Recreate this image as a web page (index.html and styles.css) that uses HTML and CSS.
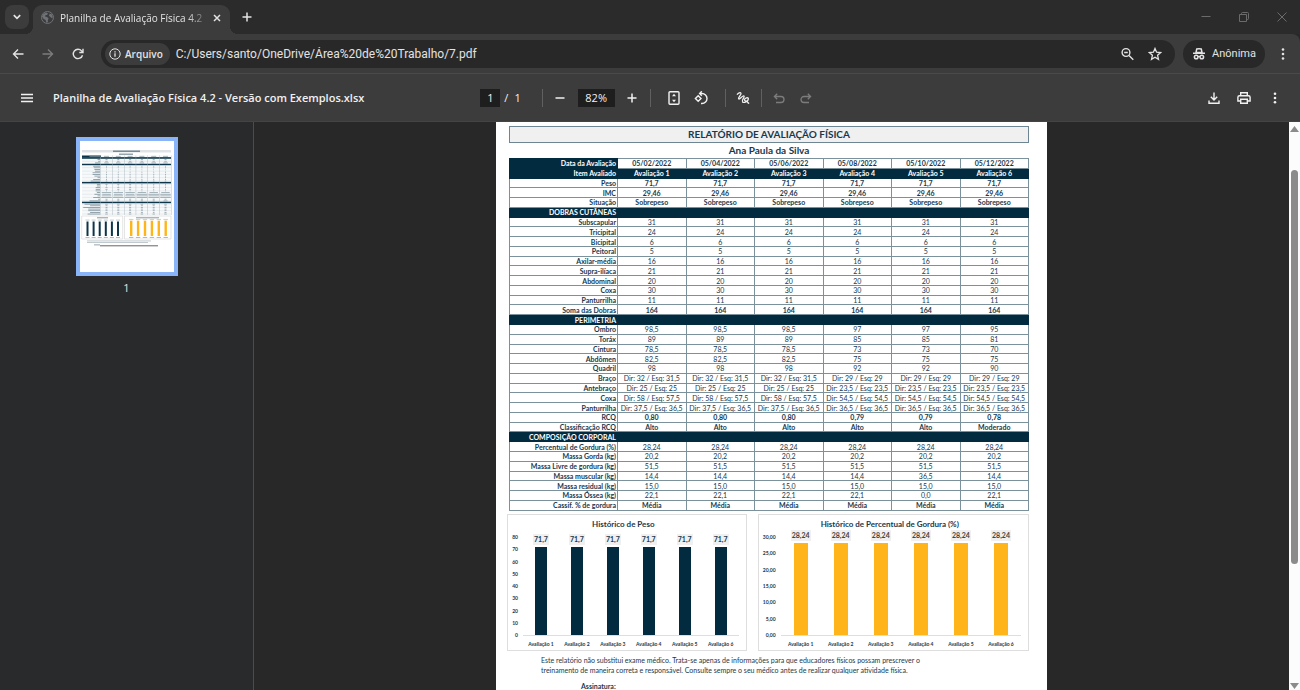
FILE: index.html
```html
<!DOCTYPE html>
<html lang="pt-BR">
<head>
  <meta charset="utf-8">
  <title>Planilha de Avaliação Física 4.2</title>
  <link rel="stylesheet" href="styles.css">
</head>
<body>
  <header class="tab-strip">
    <button class="tab-search" aria-label="Pesquisar guias">
      <svg width="10" height="10" viewBox="0 0 10 10"><path d="M1.8 3.2 5 6.4 8.2 3.2" stroke-width="1.7"/></svg>
    </button>
    <div class="tab">
      <svg class="globe" width="13" height="13" viewBox="0 0 13 13">
        <circle cx="6.5" cy="6.5" r="6" />
        <path d="M2 3.2 5 1.5l2 1-1 1.6H4.6L4 5.6l2 .4 1.6 1.6-.8 1.6.2 2-1.6.6L4.6 9 2.4 7.8 1 5.6zM8.6 2.6l2.4 1 .9 3-1.5.4-1.4-1.6-1-.4z"/>
      </svg>
      <span class="tab-title">Planilha de Avaliação Física 4.2</span>
      <button class="tab-close" aria-label="Fechar">
        <svg width="10" height="10" viewBox="0 0 10 10"><path d="m2 2 6 6M8 2 2 8" stroke-width="1.5"/></svg>
      </button>
    </div>
    <button class="new-tab" aria-label="Nova guia">
      <svg width="12" height="12" viewBox="0 0 12 12"><path d="M6 1.5v9M1.5 6h9" stroke-width="1.5"/></svg>
    </button>
    <div class="window-buttons">
      <button aria-label="Minimizar"><svg width="10" height="10" viewBox="0 0 10 10"><path d="M.5 4.5h9"/></svg></button>
      <button aria-label="Restaurar"><svg width="10" height="10" viewBox="0 0 10 10"><path d="M.5 2.5h7v7h-7zM2.5 2.5V1.5q0-1 1-1h5q1 0 1 1v5q0 1-1 1h-1"/></svg></button>
      <button aria-label="Fechar janela"><svg width="10" height="10" viewBox="0 0 10 10"><path d="m.5.5 9 9M9.5.5l-9 9"/></svg></button>
    </div>
  </header>

  <nav class="toolbar">
    <button aria-label="Voltar"><svg width="12" height="12" viewBox="0 0 12 12"><path d="M11.5 6h-10M6 1.5 1.5 6 6 10.500" stroke-width="1.4"/></svg></button>
    <button class="off" aria-label="Avançar"><svg width="12" height="12" viewBox="0 0 12 12"><path d="M.5 6h10M6 1.5 10.500 6 6 10.500" stroke-width="1.4"/></svg></button>
    <button aria-label="Recarregar"><svg width="12" height="12" viewBox="0 0 12 12"><path d="M10.500 7.200A4.700 4.700 0 1 1 9.600 2.900L11 4.300M11 .8v3.700H7.300" stroke-width="1.4"/></svg></button>
    <div class="omnibox">
      <button class="origin">
        <svg width="12" height="12" viewBox="0 0 12 12"><circle cx="6" cy="6" r="5.200"/><path d="M6 5.300v3.400M6 3.200v1.300" stroke-width="1.300"/></svg>
        Arquivo
      </button>
      <input class="url" type="text" aria-label="Endereço" value="C:/Users/santo/OneDrive/Área%20de%20Trabalho/7.pdf">
      <button aria-label="Zoom"><svg width="14" height="14" viewBox="0 0 14 14"><circle cx="6" cy="5.500" r="3.900" stroke-width="1.400"/><path d="m9 8.500 4.300 4.300M4.200 5.500h3.600" stroke-width="1.400"/></svg></button>
      <button aria-label="Favoritos"><svg width="14" height="14" viewBox="0 0 14 14"><path d="m7 1.500 1.600 3.700 4 .4-3 2.700.9 4L7 10.200l-3.500 2.100.9-4-3-2.700 4-.4z" stroke-width="1.300"/></svg></button>
    </div>
    <button class="incognito">
      <svg width="14" height="14" viewBox="0 0 14 14"><path d="M4 5.500 4.700 2q2.300-.6 4.600 0l.7 3.500zM1 6.300h12" stroke-width="1.500"/><circle cx="4.200" cy="10" r="1.800" stroke-width="1.500"/><circle cx="9.800" cy="10" r="1.800" stroke-width="1.500"/><path d="M6 9.700q1-.6 2 0" stroke-width="1.300"/></svg>
      Anônima
    </button>
    <button aria-label="Menu"><svg class="dots" width="4" height="14" viewBox="0 0 4 14"><circle cx="2" cy="2.500" r="1.300"/><circle cx="2" cy="7" r="1.300"/><circle cx="2" cy="11.500" r="1.300"/></svg></button>
  </nav>

  <div class="pdf-bar">
    <div class="pdf-start">
      <button aria-label="Menu lateral"><svg width="12" height="10" viewBox="0 0 12 10"><path d="M0 1.500h12M0 5h12M0 8.500h12" stroke-width="1.500"/></svg></button>
      <h1>Planilha de Avaliação Física 4.2 - Versão com Exemplos.xlsx</h1>
    </div>
    <div class="pdf-middle">
      <input class="page-no" type="text" aria-label="Página" value="1">
      <span class="page-count"><span>/</span><span>1</span></span>
      <i></i>
      <button aria-label="Diminuir zoom"><svg width="12" height="12" viewBox="0 0 12 12"><path d="M1.500 6h9" stroke-width="1.500"/></svg></button>
      <input class="zoom" type="text" aria-label="Nível de zoom" value="82%">
      <button aria-label="Aumentar zoom"><svg width="12" height="12" viewBox="0 0 12 12"><path d="M6 1.500v9M1.500 6h9" stroke-width="1.500"/></svg></button>
      <i></i>
      <div class="view-tools">
        <button aria-label="Ajustar à página"><svg width="12" height="14" viewBox="0 0 12 14"><rect x="1" y=".8" width="10" height="12.400" rx="1" stroke-width="1.400"/><path class="fill" d="M6 2.800 8 5.300H4zM6 11.200 4 8.700h4z"/></svg></button>
        <button aria-label="Girar"><svg width="14" height="14" viewBox="0 0 14 14"><path d="M4.200 4.700 7 7.500l-2.800 2.800L1.400 7.500zM6 2.500h2a5 5 0 0 1 0 10H7M7.800.3 5.600 2.500l2.200 2.200" stroke-width="1.400"/></svg></button>
      </div>
      <i></i>
      <button aria-label="Desenhar"><svg width="14" height="14" viewBox="0 0 14 14"><path d="M1 3.600C2.300 2 4.300.9 5 2.200 5.700 3.600 1.800 6.400 2.700 7.800 3.700 9.100 6.700 3.900 8 5 9.300 6.200 5.200 8.800 6.500 10.800c1.300 1.600 5.800-.6 5.900-2.900C12.400 5.900 8.600 6.800 8.500 8.700c-.1 1.700 2.600 1 3.200 2.600.2.700.8 1 1.500.9" stroke-width="1.300"/></svg></button>
      <i></i>
      <button class="off" aria-label="Desfazer"><svg width="12" height="12" viewBox="0 0 12 12"><path d="M1.500 4.500H8a3 3 0 0 1 0 6H3M4.200 1.700 1.400 4.500l2.800 2.800" stroke-width="1.300"/></svg></button>
      <button class="off" aria-label="Refazer"><svg width="12" height="12" viewBox="0 0 12 12"><path d="M10.500 4.500H4a3 3 0 0 0 0 6h5M7.800 1.700l2.800 2.800-2.800 2.800" stroke-width="1.300"/></svg></button>
    </div>
    <div class="pdf-end">
      <button aria-label="Baixar"><svg width="12" height="12" viewBox="0 0 12 12"><path d="M6 .5v7M2.800 4.700 6 7.900l3.200-3.200M1 8.500v2.700h10V8.500" stroke-width="1.400"/></svg></button>
      <button aria-label="Imprimir"><svg width="14" height="14" viewBox="0 0 14 14"><path d="M3.700 4.500V1.700h6.600v2.800M3.500 10H.9V6.300q0-1.600 1.600-1.600h9q1.600 0 1.600 1.600V10h-2.600M3.700 8.300h6.600v4H3.700z" stroke-width="1.400"/></svg></button>
      <button class="more" aria-label="Mais ações"><svg class="dots" width="4" height="14" viewBox="0 0 4 14"><circle cx="2" cy="2.800" r="1.300"/><circle cx="2" cy="7" r="1.300"/><circle cx="2" cy="11.200" r="1.300"/></svg></button>
    </div>
  </div>

  <div class="content">
    <aside class="sidebar">
      <a class="thumb" href="#page"><svg id="thumb" width="94" height="131" viewBox="0 0 94 131"></svg></a>
      <span>1</span>
    </aside>

    <main class="viewer">
      <article class="page" id="page">
        <h2>RELATÓRIO DE AVALIAÇÃO FÍSICA</h2>
        <h3>Ana Paula da Silva</h3>
        <table class="report">
          <colgroup><col class="item"><col span="6"></colgroup>
          <tbody id="report"></tbody>
        </table>
        <div class="charts">
          <section class="chart weight">
            <h4>Histórico de Peso</h4>
            <div class="axis" id="weight-axis"></div>
            <div class="plot" id="weight-plot"></div>
          </section>
          <section class="chart fat">
            <h4>Histórico de Percentual de Gordura (%)</h4>
            <div class="axis" id="fat-axis"></div>
            <div class="plot" id="fat-plot"></div>
          </section>
        </div>
        <p class="note">Este relatório não substitui exame médico. Trata-se apenas de informações para que educadores físicos possam prescrever o<br>treinamento de maneira correta e responsável. Consulte sempre o seu médico antes de realizar qualquer atividade física.</p>
        <p class="signature">Assinatura:</p>
      </article>
    </main>

    <div class="scrollbar">
      <svg width="9" height="6" viewBox="0 0 9 6"><path d="M4.500 0 9 6H0z"/></svg>
      <div class="scroll-thumb"></div>
      <svg width="9" height="6" viewBox="0 0 9 6"><path d="M0 0h9L4.500 6z"/></svg>
    </div>
  </div>

  <script src="script.js"></script>
</body>
</html>
```
FILE: styles.css
```css
* {
  box-sizing: border-box;
}

body {
  margin: 0;
  height: 100vh;
  display: flex;
  flex-direction: column;
  overflow: hidden;
  background-color: #282828;
  color: #e3e3e3;
  font-family: "Open Sans", "Noto Sans", sans-serif;
  font-size: 11px;
}

h1, h2, h3, h4, p {
  margin: 0;
}

button, input {
  font: inherit;
  color: inherit;
  background: none;
  border: 0;
  padding: 0;
}

button {
  display: flex;
  align-items: center;
  justify-content: center;
}

svg {
  display: block;
  flex: none;
  fill: none;
  stroke: currentColor;
}

.dots, .fill {
  fill: currentColor;
  stroke: none;
}

.off {
  color: #7c7c7c;
}

/* tabs */
.tab-strip {
  display: flex;
  align-items: center;
  height: 34px;
  flex: none;
  background-color: #2b2b2b;
}

.tab-search {
  width: 24px;
  height: 24px;
  margin: 0 4px 0 5px;
  border-radius: 8px;
  background-color: #3c3c3c;
}

.tab {
  position: relative;
  display: flex;
  align-items: center;
  align-self: flex-end;
  width: 197px;
  height: 29px;
  padding: 0 8px 4px;
  border-radius: 9px 9px 0 0;
  background-color: #3c3c3c;
}

/* flared feet of the active tab */
.tab::before, .tab::after {
  content: "";
  position: absolute;
  bottom: 0;
  width: 8px;
  height: 8px;
}

.tab::before {
  right: 100%;
  background: radial-gradient(circle at 0 0, transparent 8px, #3c3c3c 8px);
}

.tab::after {
  left: 100%;
  background: radial-gradient(circle at 100% 0, transparent 8px, #3c3c3c 8px);
}

.globe {
  color: #6e7276;
}

.globe path {
  fill: currentColor;
  stroke: none;
}

.tab-title {
  flex: 1;
  margin: 0 2px 0 6px;
  font-size: 10px;
  white-space: nowrap;
  -webkit-mask-image: linear-gradient(to right, #000 85%, transparent);
  mask-image: linear-gradient(to right, #000 85%, transparent);
}

.new-tab {
  width: 34px;
  height: 24px;
}

.window-buttons {
  display: flex;
  gap: 28px;
  margin-left: auto;
  padding-right: 13px;
  color: #6b6b6b;
}

/* address bar */
.toolbar {
  display: flex;
  align-items: center;
  height: 40px;
  flex: none;
  padding: 0 7px 0 3px;
  background-color: #3c3c3c;
  border-bottom: 1px solid #4a4a4a;
  border-radius: 0 8px 0 0;
}

.toolbar > button {
  width: 30px;
  height: 28px;
}

.toolbar > button:last-child {
  width: 20px;
  margin-left: 8px;
}

.omnibox {
  flex: 1;
  display: flex;
  align-items: center;
  gap: 14px;
  height: 28px;
  margin: 0 8px;
  padding: 0 13px 0 4px;
  border-radius: 14px;
  background-color: #282828;
}

.origin {
  gap: 4px;
  height: 22px;
  padding: 0 7px 0 4px;
  border-radius: 11px;
  background-color: #3c3c3c;
  font-size: 10px;
  font-weight: 600;
}

.url {
  flex: 1;
  margin-left: -8px;
  font-family: Roboto, sans-serif;
  font-size: 12px;
}

.toolbar > .incognito {
  width: 82px;
  gap: 6px;
  border-radius: 14px;
  background-color: #282828;
  font-family: Roboto, sans-serif;
}

/* pdf controls */
.pdf-bar {
  display: grid;
  grid-template-columns: 1fr auto 1fr;
  align-items: center;
  height: 48px;
  flex: none;
  background-color: #3c3c3c;
  border-bottom: 1px solid #444;
  color: #f1f1f1;
}

.pdf-bar .off {
  color: #7c7c7c;
}

.pdf-start {
  display: flex;
  align-items: center;
  gap: 20px;
  padding-left: 21px;
}

.pdf-start h1 {
  font-size: 11px;
  font-weight: 600;
  white-space: nowrap;
}

.pdf-middle {
  display: flex;
  align-items: center;
}

.pdf-middle button {
  width: 27px;
  height: 24px;
}

.view-tools {
  display: flex;
  padding: 0 6px;
}

.pdf-middle i {
  width: 1px;
  height: 18px;
  margin: 0 4px;
  background-color: #606060;
}

.pdf-middle input {
  height: 18px;
  background-color: #1e1e1e;
  text-align: center;
}

.page-no {
  width: 20px;
}

.page-count {
  display: flex;
  gap: 6px;
  padding: 0 17px 0 4px;
}

.zoom {
  width: 37px;
  margin: 0 4px;
}

.pdf-end {
  display: flex;
  gap: 17px;
  justify-content: flex-end;
  padding-right: 23px;
}

.more {
  margin-left: 5px;
}

/* document */
.content {
  flex: 1;
  min-height: 0;
  display: flex;
}

.sidebar {
  display: flex;
  flex-direction: column;
  align-items: center;
  gap: 4px;
  width: 254px;
  padding-top: 15px;
  background-color: #282a2b;
  border-right: 1px solid #4c4c4c;
}

.thumb {
  padding: 4px;
  background-color: #8ab4f8;
}

.viewer {
  flex: 1;
  overflow: hidden;
}

.page {
  width: 551px;
  height: 780px;
  margin: 0 auto;
  padding: 4px 18px 0 13px;
  background-color: #fff;
  color: #17394e;
  font-family: Lato, sans-serif;
  font-size: 7px;
  line-height: 9px;
}

.page h2 {
  border: 1px solid #6c8793;
  background-color: #f0f0f0;
  font-size: 10px;
  line-height: 15px;
  text-align: center;
}

.page h3 {
  font-size: 10px;
  line-height: 15px;
  text-align: center;
}

.report {
  width: 100%;
  height: 353px;
  table-layout: fixed;
  border-collapse: collapse;
}

.report .item {
  width: 108px;
}

.report th, .report td {
  padding: 0;
  border: 1px solid #7b929d;
  line-height: 8px;
  text-align: center;
  white-space: nowrap;
}

.report tr th:first-child {
  padding-right: 1px;
  text-align: right;
}

.report .strong td {
  font-weight: 700;
}

.report .dark th, .report .dark td, .report .date th {
  background-color: #032b40;
  border-color: #032b40;
  color: #fff;
}

.charts {
  display: flex;
  gap: 11px;
  margin: 3px 0 0 -2px;
}

.chart {
  flex: 239;
  display: grid;
  grid-template: 18px 1fr / 15px 1fr;
  height: 137px;
  padding-right: 7px;
  border: 1px solid #dedede;
  font-weight: 700;
}

.chart.fat {
  flex: 272;
  grid-template-columns: 22px 1fr;
}

.chart h4 {
  grid-column: 1 / 3;
  font-size: 8px;
  line-height: 18px;
  text-align: center;
}

.axis {
  display: flex;
  flex-direction: column;
  justify-content: space-between;
  align-self: start;
  height: 106px;
  font-size: 5px;
  line-height: 8px;
  text-align: right;
  padding-right: 5px;
}

.plot {
  display: flex;
  margin-top: 4px;
  height: 98px;
}

.bar-slot {
  flex: 1;
  display: flex;
  flex-direction: column;
  align-items: center;
  justify-content: flex-end;
  height: 112px;
}

.bar {
  flex: none;
  width: 12px;
  margin-top: 2px;
  background-color: #032b40;
}

.fat .bar {
  width: 14px;
  background-color: #ffb519;
}

.value {
  padding: 1px 1px;
  background-color: #f0f0f0;
}

.fat .value {
  color: #444;
}

.bar-name {
  align-self: stretch;
  border-top: 1px solid #dedede;
  padding-top: 3px;
  font-size: 5px;
  line-height: 10px;
  text-align: center;
  white-space: nowrap;
}

.note {
  margin: 4px 0 0 32px;
  line-height: 10px;
  white-space: nowrap;
}

.signature {
  margin: 7px 0 0 72px;
  font-weight: 700;
}

/* scrollbar */
.scrollbar {
  display: flex;
  flex-direction: column;
  align-items: center;
  width: 11px;
  padding: 4px 0 1px;
  background-color: #fcfcfc;
}

.scrollbar svg {
  fill: #8b8b8b;
  stroke: none;
}

.scroll-thumb {
  width: 7px;
  height: 70%;
  margin: 38px 0 auto;
  border-radius: 4px;
  background-color: #8b8b8b;
}
```
FILE: script.js
```javascript
const rows = [
  ["date", "Data da Avaliação", "05/02/2022", "05/04/2022", "05/06/2022", "05/08/2022", "05/10/2022", "05/12/2022"],
  ["dark", "Item Avaliado", "Avaliação 1", "Avaliação 2", "Avaliação 3", "Avaliação 4", "Avaliação 5", "Avaliação 6"],
  ["strong", "Peso", "71,7"],
  ["strong", "IMC", "29,46"],
  ["strong", "Situação", "Sobrepeso"],
  ["section", "DOBRAS CUTÂNEAS"],
  ["", "Subscapular", "31"],
  ["", "Tricipital", "24"],
  ["", "Bicipital", "6"],
  ["", "Peitoral", "5"],
  ["", "Axilar-média", "16"],
  ["", "Supra-ilíaca", "21"],
  ["", "Abdominal", "20"],
  ["", "Coxa", "30"],
  ["", "Panturrilha", "11"],
  ["strong", "Soma das Dobras", "164"],
  ["section", "PERIMETRIA"],
  ["", "Ombro", "98,5", "98,5", "98,5", "97", "97", "95"],
  ["", "Toráx", "89", "89", "89", "85", "85", "81"],
  ["", "Cintura", "78,5", "78,5", "78,5", "73", "73", "70"],
  ["", "Abdômen", "82,5", "82,5", "82,5", "75", "75", "75"],
  ["", "Quadril", "98", "98", "98", "92", "92", "90"],
  ["", "Braço", "Dir: 32 / Esq: 31,5", "Dir: 32 / Esq: 31,5", "Dir: 32 / Esq: 31,5", "Dir: 29 / Esq: 29", "Dir: 29 / Esq: 29", "Dir: 29 / Esq: 29"],
  ["", "Antebraço", "Dir: 25 / Esq: 25", "Dir: 25 / Esq: 25", "Dir: 25 / Esq: 25", "Dir: 23,5 / Esq: 23,5", "Dir: 23,5 / Esq: 23,5", "Dir: 23,5 / Esq: 23,5"],
  ["", "Coxa", "Dir: 58 / Esq: 57,5", "Dir: 58 / Esq: 57,5", "Dir: 58 / Esq: 57,5", "Dir: 54,5 / Esq: 54,5", "Dir: 54,5 / Esq: 54,5", "Dir: 54,5 / Esq: 54,5"],
  ["", "Panturrilha", "Dir: 37,5 / Esq: 36,5", "Dir: 37,5 / Esq: 36,5", "Dir: 37,5 / Esq: 36,5", "Dir: 36,5 / Esq: 36,5", "Dir: 36,5 / Esq: 36,5", "Dir: 36,5 / Esq: 36,5"],
  ["strong", "RCQ", "0,80", "0,80", "0,80", "0,79", "0,79", "0,78"],
  ["strong", "Classificação RCQ", "Alto", "Alto", "Alto", "Alto", "Alto", "Moderado"],
  ["section", "COMPOSIÇÃO CORPORAL"],
  ["", "Percentual de Gordura (%)", "28,24"],
  ["", "Massa Gorda (kg)", "20,2"],
  ["", "Massa Livre de gordura (kg)", "51,5"],
  ["", "Massa muscular (kg)", "14,4", "14,4", "14,4", "14,4", "36,5", "14,4"],
  ["", "Massa residual (kg)", "15,0"],
  ["", "Massa Óssea (kg)", "22,1", "22,1", "22,1", "22,1", "0,0", "22,1"],
  ["strong", "Cassif. % de gordura", "Média"]
];

// A row with a single value repeats it in all six columns
function buildReport() {
  let html = "";
  for (const [kind, name, ...values] of rows) {
    if (kind === "section") {
      html += `<tr class="dark"><th>${name}</th><td colspan="6"></td></tr>`;
      continue;
    }
    const cls = kind === "dark" ? "dark strong" : kind === "date" ? "date strong" : kind;
    html += `<tr class="${cls}"><th>${name}</th>`;
    for (let i = 0; i < 6; i++) {
      html += `<td>${values[i] || values[0]}</td>`;
    }
    html += "</tr>";
  }
  document.getElementById("report").innerHTML = html;
}

function buildChart(id, value, max, step, decimals) {
  const format = n => n.toFixed(decimals).replace(".", ",");
  let axis = "";
  for (let n = max; n >= 0; n -= step) {
    axis += `<span>${format(n)}</span>`;
  }
  let plot = "";
  for (let i = 1; i <= 6; i++) {
    plot += `<div class="bar-slot"><span class="value">${String(value).replace(".", ",")}</span>` +
      `<div class="bar" style="height: ${Math.round(value / max * 98)}px"></div>` +
      `<span class="bar-name">Avaliação ${i}</span></div>`;
  }
  document.getElementById(id + "-axis").innerHTML = axis;
  document.getElementById(id + "-plot").innerHTML = plot;
}

function buildThumb() {
  const rect = (x, y, w, h, fill) => `<rect x="${x}" y="${y}" width="${w}" height="${h}" fill="${fill}"/>`;
  let s = rect(0, 0, 94, 131, "#fff");
  s += rect(2, 9, 89, 2.5, "#dfe3e5") + rect(33, 9.6, 27, 1.2, "#5b7482");
  s += rect(39, 12.6, 14, 1.2, "#7c909b");
  rows.forEach((row, i) => {
    const y = 14.5 + i * 1.65;
    if (row[0] === "section" || row[0] === "dark") {
      s += rect(2, y, 89, 1.8, "#0c3549");
      return;
    }
    s += rect(2, y, 89, 1.5, i % 2 ? "#e9eef0" : "#f6f8f9");
    if (row[0] === "date") s += rect(2, y, 19, 1.8, "#0c3549");
    const w = Math.min(row[1].length * .62, 17);
    s += rect(20 - w, y + .4, w, .8, "#7c909b");
    for (let c = 0; c < 6; c++) {
      const v = (row[c + 2] || row[2]).length * .5;
      s += rect(26.5 + c * 11.8 - v / 2, y + .4, v, .8, "#93a4ad");
    }
  });
  for (let c = 0; c < 7; c++) s += rect(20.5 + c * 11.75, 14.5, .4, 59.5, "#9fb0b8");
  s += `<path d="M1.7 75h41v23h-41zM44.5 75h46.5v23H44.5z" stroke="#d4d4d4" stroke-width=".6"/>`;
  s += rect(17, 76.3, 11, 1, "#8798a2") + rect(56, 76.3, 23, 1, "#8798a2");
  for (let i = 0; i < 6; i++) {
    s += rect(6.5 + i * 6.1, 80.5, 2, 14.5, "#0c3549") + rect(50 + i * 6.9, 79.7, 2.4, 15.3, "#ffb519");
    s += rect(5.5 + i * 6.1, 78.5, 4, 1.2, "#ccd3d7") + rect(49 + i * 6.9, 77.9, 4.4, 1.2, "#ccd3d7");
    s += rect(5.5 + i * 6.1, 96, 4, .8, "#9aa9b1") + rect(49 + i * 6.9, 96, 4.4, .8, "#9aa9b1");
  }
  s += rect(7, 99.6, 64, .7, "#a5b3ba") + rect(7, 101, 61, .7, "#a5b3ba");
  s += rect(14, 103.5, 6, .8, "#7c909b") + rect(20, 104.3, 58, 1, "#666");
  document.getElementById("thumb").innerHTML = `<g stroke="none">${s}</g>`;
}

buildReport();
buildChart("weight", 71.7, 80, 10, 0);
buildChart("fat", 28.24, 30, 5, 2);
buildThumb();
```
